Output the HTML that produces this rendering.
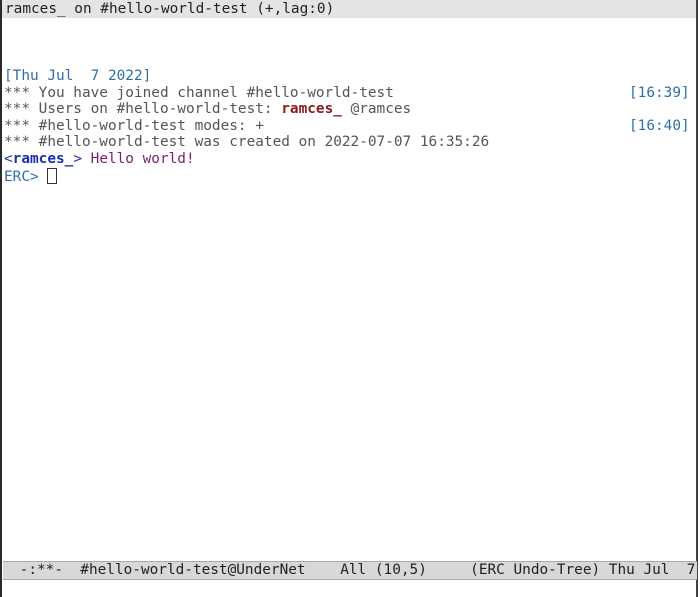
<!DOCTYPE html>
<html><head><style>
html,body{margin:0;padding:0;background:#fff;}
body{width:700px;height:597px;position:relative;overflow:hidden;font-family:"DejaVu Sans Mono","Liberation Mono",monospace;font-size:14.4px;}
.lb{position:absolute;left:0;top:0;width:2px;height:597px;background:#2a2a2a;}
.rb{position:absolute;left:696px;top:0;width:2px;height:597px;background:#444;}
.hdr{position:absolute;left:2px;top:0;width:694px;height:18px;background:#e4e4e4;color:#222;line-height:18px;padding-left:3px;box-sizing:border-box;}
.l{position:absolute;left:4px;white-space:pre;line-height:17px;color:#555;}
.ts{color:#2f6fa8;}
.ts2{position:absolute;left:629px;white-space:pre;line-height:17px;color:#2f6fa8;}
.nick{color:#8b1a1a;font-weight:bold;}
.me{color:#1a2fb0;font-weight:bold;}
.msg{color:#7a1f6e;}
.ml{position:absolute;left:3px;top:561px;width:694px;height:19px;background:#d8d8d8;border-top:1px solid #aaa;border-bottom:1px solid #aaa;box-sizing:border-box;color:#222;white-space:pre;line-height:17px;padding-left:8px;overflow:hidden;}
.cur{display:inline-block;width:8px;height:14px;border:1px solid #333;vertical-align:-3px;}
</style></head><body>
<div class="lb"></div><div class="rb"></div>
<div class="hdr">ramces_ on #hello-world-test (+,lag:0)</div>
<div class="l ts" style="top:68px">[Thu Jul  7 2022]</div>
<div class="l" style="top:85px">*** You have joined channel #hello-world-test</div>
<div class="ts2" style="top:85px">[16:39]</div>
<div class="l" style="top:101px">*** Users on #hello-world-test: <span class="nick">ramces_</span> @ramces</div>
<div class="l" style="top:118px">*** #hello-world-test modes: +</div>
<div class="ts2" style="top:118px">[16:40]</div>
<div class="l" style="top:134px">*** #hello-world-test was created on 2022-07-07 16:35:26</div>
<div class="l" style="top:151px;color:#1a2fb0">&lt;<span class="me">ramces_</span>&gt; <span class="msg">Hello world!</span></div>
<div class="l" style="top:168px;color:#2f6fa8">ERC&gt; <span class="cur"></span></div>
<div class="ml"> -:**-  #hello-world-test@UnderNet    All (10,5)     (ERC Undo-Tree) Thu Jul  7</div>
</body></html>
